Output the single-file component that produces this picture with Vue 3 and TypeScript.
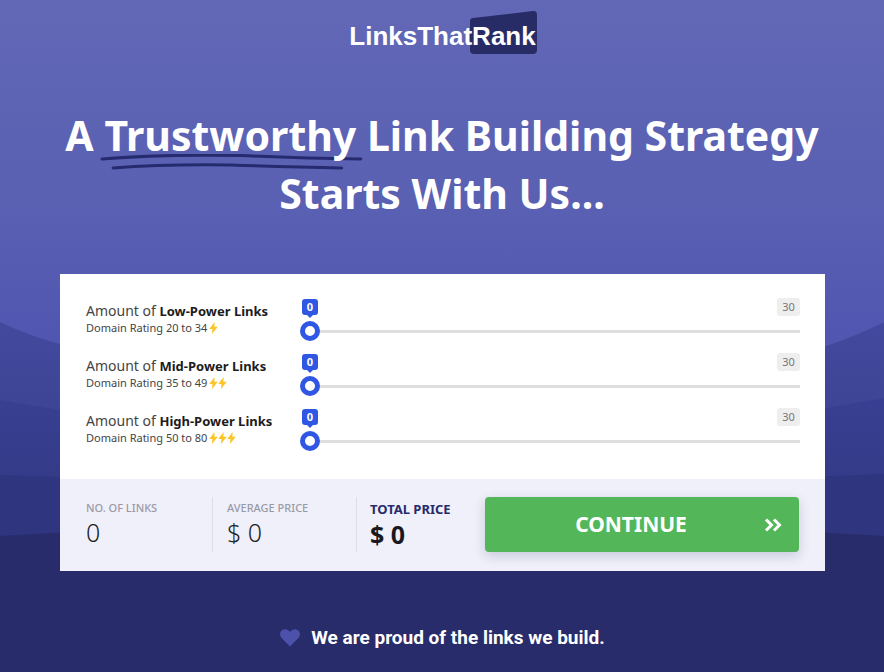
<script setup lang="ts">
import { computed, reactive } from 'vue'

interface Tier {
  id: string
  name: string
  rating: string
  bolts: number
  price: number
  amount: number
}

const MAX_LINKS = 30

const tiers = reactive<Tier[]>([
  { id: 'low', name: 'Low-Power Links', rating: '20 to 34', bolts: 1, price: 120, amount: 0 },
  { id: 'mid', name: 'Mid-Power Links', rating: '35 to 49', bolts: 2, price: 180, amount: 0 },
  { id: 'high', name: 'High-Power Links', rating: '50 to 80', bolts: 3, price: 260, amount: 0 },
])

const count = computed(() => tiers.reduce((sum, t) => sum + t.amount, 0))
const total = computed(() => tiers.reduce((sum, t) => sum + t.amount * t.price, 0))
const average = computed(() => (count.value ? Math.round(total.value / count.value) : 0))

// The bubble follows the thumb, which is 20px wide.
const bubbleLeft = (amount: number) => `calc((100% - 20px) * ${amount / MAX_LINKS})`
</script>

<template>
  <div class="page">
    <svg class="waves" viewBox="0 0 884 672" preserveAspectRatio="none" aria-hidden="true">
      <defs>
        <linearGradient id="w1" x1="0" y1="0" x2="0" y2="1">
          <stop offset="0" stop-color="#434a9e" /><stop offset="0.3" stop-color="#3d4494" />
        </linearGradient>
        <linearGradient id="w2" x1="0" y1="0" x2="0" y2="1">
          <stop offset="0" stop-color="#393f92" /><stop offset="0.35" stop-color="#333a86" />
        </linearGradient>
      </defs>
      <path fill="url(#w1)" d="M0 322 Q30 336 60 344 Q442 440 826 346 Q856 336 884 322 V672 H0Z" />
      <path fill="url(#w2)" d="M0 400 Q442 480 884 398 V672 H0Z" />
      <path fill="#2f357f" d="M0 475 Q442 492 884 474 V672 H0Z" />
      <path fill="#292c6b" d="M0 536 Q442 510 884 536 V672 H0Z" />
    </svg>

    <header class="header">
      <a class="logo" href="#">
        <span>LinksThat</span><span class="rank">
          <svg class="rank-shape" viewBox="0 0 67 43" aria-hidden="true">
            <path fill="#282c66" d="M0 10 Q0 7.4 3 7 L63 0.1 Q67 -0.3 67 4 V39 Q67 43 63 43 H4 Q0 43 0 39Z" />
          </svg>
          <span class="rank-text">Rank</span>
        </span>
      </a>
    </header>

    <main class="main">
      <h1 class="title">
        A <span class="marked">Trustworthy<svg class="scribble" viewBox="0 0 262 16" preserveAspectRatio="none" aria-hidden="true">
          <path d="M2 5 Q60 0 140 1.5 Q200 4.5 259 5" />
          <path d="M13 14 Q65 10 130 11 Q190 13 240 14" />
        </svg></span> Link Building Strategy<br />Starts With Us...
      </h1>

      <form class="card" @submit.prevent>
        <div class="tiers">
          <div v-for="tier in tiers" :key="tier.id" class="tier">
            <label class="label" :for="tier.id">
              <span class="name">Amount of <strong>{{ tier.name }}</strong></span>
              <span class="rating">
                Domain Rating {{ tier.rating }}
                <span class="bolts">
                  <svg v-for="n in tier.bolts" :key="n" class="bolt" viewBox="0 0 9 12" aria-hidden="true">
                    <path d="M5.6 0 L0.2 6.9 H3.4 L3 12 L8.8 4.8 H5.4Z" />
                  </svg>
                </span>
              </span>
            </label>
            <div class="slider">
              <div class="scale">
                <output class="bubble" :for="tier.id" :style="{ left: bubbleLeft(tier.amount) }">{{ tier.amount }}</output>
                <span class="max">{{ MAX_LINKS }}</span>
              </div>
              <input :id="tier.id" v-model.number="tier.amount" class="range" type="range" min="0" :max="MAX_LINKS" />
            </div>
          </div>
        </div>

        <div class="summary">
          <div class="stat">
            <span class="stat-label">NO. OF LINKS</span>
            <span class="stat-value">{{ count }}</span>
          </div>
          <div class="stat">
            <span class="stat-label">AVERAGE PRICE</span>
            <span class="stat-value">$ {{ average }}</span>
          </div>
          <div class="stat total">
            <span class="stat-label">TOTAL PRICE</span>
            <span class="stat-value">$ {{ total }}</span>
          </div>
          <button class="continue" type="submit">
            <span class="continue-text">CONTINUE</span>
            <svg class="chevrons" viewBox="0 0 18 14" aria-hidden="true">
              <path d="M2 1.5 L7.5 7 L2 12.5 M10 1.5 L15.5 7 L10 12.5" />
            </svg>
          </button>
        </div>
      </form>

      <p class="proud">
        <svg class="heart" viewBox="0 0 20 18" aria-hidden="true">
          <path d="M10 17.5 L1.6 9 C-0.6 6.5 -0.3 3 2 1.2 C4.5 -0.6 7.6 0 10 2.7 C12.4 0 15.5 -0.6 18 1.2 C20.3 3 20.6 6.5 18.4 9Z" />
        </svg>
        We are proud of the links we build.
      </p>
    </main>
  </div>
</template>

<style>
body {
  margin: 0;
  background: #292c6b;
}
</style>

<style scoped>
.page {
  position: relative;
  min-height: 100vh;
  box-sizing: border-box;
  padding: 0 59px 0 60px;
  background: linear-gradient(#6268b6 0, #5a60b2 200px, #5157b0 330px);
  font-family: 'Noto Sans', 'Open Sans', sans-serif;
}
.waves {
  position: absolute;
  inset: 0;
  width: 100%;
  height: 100%;
}
.header,
.main {
  position: relative;
}
.header {
  display: flex;
  justify-content: center;
  padding-top: 20px;
}
.logo {
  display: flex;
  color: #fff;
  font: bold 26px/32px 'Liberation Sans', Arial, sans-serif;
  text-decoration: none;
}
.rank {
  position: relative;
}
.rank-shape {
  position: absolute;
  left: -2px;
  bottom: -2px;
  z-index: -1;
  width: 67px;
  height: 43px;
}
.title {
  margin: 54px -59px 0 -60px;
  color: #fff;
  font-size: 41px;
  font-weight: 700;
  line-height: 58px;
  text-align: center;
}
.header {
  z-index: 0;
}
.marked {
  position: relative;
  z-index: 0;
}
.scribble {
  position: absolute;
  z-index: -1;
  left: -4px;
  bottom: -7px;
  width: calc(100% + 12px);
  height: 16px;
  fill: none;
  stroke: #262b70;
  stroke-width: 3;
  stroke-linecap: round;
}
.card {
  margin-top: 52px;
  background: #fff;
}
.tiers {
  display: grid;
  gap: 12px;
  padding: 24px 25px 28px;
}
.tier {
  display: grid;
  grid-template-columns: 215px 1fr;
  align-items: center;
}
.label {
  display: flex;
  flex-direction: column;
  padding: 0 0 1px 1px;
  color: #444;
  white-space: nowrap;
}
.name {
  font-size: 14px;
  line-height: 18px;
}
.name strong {
  color: #1c1c1c;
  font-size: 13px;
}
.rating {
  display: flex;
  align-items: center;
  gap: 2px;
  font-size: 11px;
  line-height: 16px;
}
.bolts {
  display: flex;
}
.bolt {
  width: 9px;
  height: 12px;
  fill: #fdc426;
}
.scale {
  position: relative;
  display: flex;
  justify-content: flex-end;
  height: 18px;
  margin-bottom: 5px;
}
.bubble {
  position: absolute;
  top: 1px;
  width: 16px;
  height: 16px;
  margin-left: 2px;
  border-radius: 3px;
  background: #2f57e3;
  color: #fff;
  font-size: 11px;
  font-weight: 700;
  line-height: 16px;
  text-align: center;
}
.bubble::after {
  content: '';
  position: absolute;
  top: 100%;
  left: 5px;
  border: 3px solid transparent;
  border-top-color: #2f57e3;
  border-bottom: 0;
}
.max {
  width: 23px;
  border-radius: 3px;
  background: #eee;
  color: #777;
  font-size: 11px;
  line-height: 18px;
  text-align: center;
}
.range {
  display: block;
  width: 100%;
  height: 20px;
  margin: 0;
  appearance: none;
  background: linear-gradient(#dedee0, #dedee0) center / 100% 3px no-repeat;
}
.range::-webkit-slider-thumb {
  width: 20px;
  height: 20px;
  box-sizing: border-box;
  border: 5px solid #2f57e3;
  border-radius: 50%;
  appearance: none;
  background: #fff;
}
.summary {
  display: grid;
  grid-template-columns: 127px 144px 128px 1fr;
  padding: 18px 26px 19px 26px;
  background: #f0f0fa;
}
.stat {
  display: flex;
  flex-direction: column;
  padding: 2px 0 0 14px;
  border-right: 1px solid #dddde8;
  white-space: nowrap;
}
.stat:first-child {
  padding-left: 0;
}
.stat-label {
  color: #9a9aa6;
  font-size: 11px;
  font-weight: 500;
  line-height: 18px;
}
.stat-value {
  color: #222;
  font-size: 25px;
  font-weight: 300;
  line-height: 30px;
}
.total {
  padding-left: 13px;
  border-right: 0;
}
.total .stat-label {
  color: #262b6c;
  font-size: 13px;
  font-weight: 700;
  line-height: 20px;
}
.total .stat-value {
  color: #1a1a1e;
  font-weight: 700;
}
.continue {
  display: flex;
  align-items: center;
  height: 55px;
  padding: 0 17px;
  border: 0;
  border-radius: 4px;
  background: #53b75a;
  box-shadow: 0 4px 12px rgba(40, 44, 100, 0.2);
  color: #fff;
  font: 700 21px/28px 'Noto Sans', 'Open Sans', sans-serif;
  cursor: pointer;
}
.continue-text {
  flex: 1;
  padding: 0 4px 2px 0;
}
.chevrons {
  width: 18px;
  height: 14px;
  fill: none;
  stroke: #fff;
  stroke-width: 3;
}
.proud {
  display: flex;
  align-items: center;
  justify-content: center;
  gap: 11px;
  margin: 0;
  padding: 55px 0 20px;
  color: #fff;
  font: 700 19px/24px Roboto, sans-serif;
}
.heart {
  width: 20px;
  height: 18px;
  fill: #4c51aa;
}
</style>
